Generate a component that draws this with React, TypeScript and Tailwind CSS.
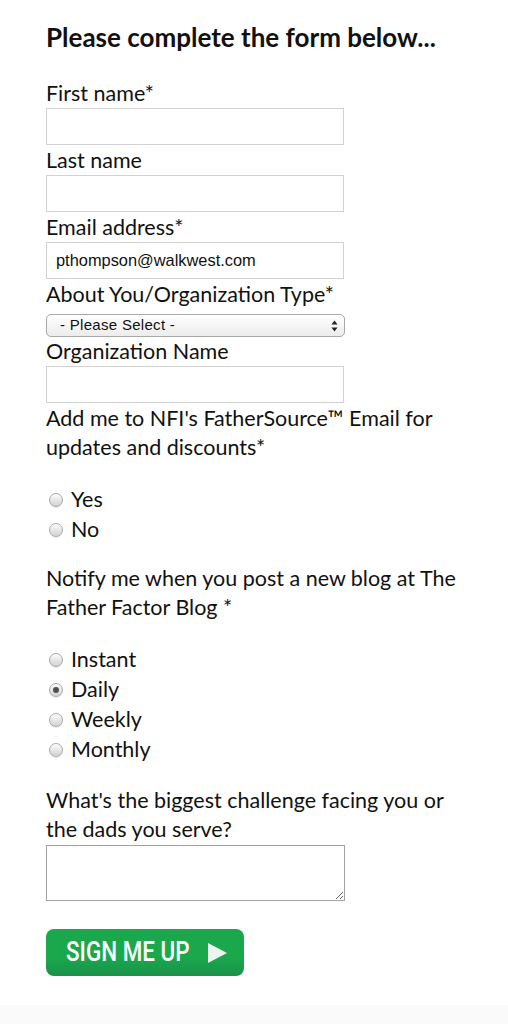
import React from "react";

const font = { fontFamily: "Lato, 'Noto Sans', sans-serif" };

function Label({ children }: { children: React.ReactNode }) {
  return <div className="text-[21.5px] leading-[29px] text-[#111]">{children}</div>;
}

function TextInput({ value }: { value?: string }) {
  return (
    <input
      type="text"
      defaultValue={value}
      className="mb-[1px] block h-[37px] w-[298px] border border-[#d2d2d2] bg-white px-[9px] text-[16.4px] text-[#111] outline-none"
      style={{ fontFamily: "'Liberation Sans', Arial, sans-serif" }}
    />
  );
}

function Radio({ label, checked }: { label: string; checked?: boolean }) {
  return (
    <div className="flex h-[30px] items-center">
      <span className="ml-[3px] mt-[2px] flex h-[14px] w-[14px] items-center justify-center rounded-full border border-[#a9a9a9] bg-linear-to-b from-[#fdfdfd] to-[#d2d2d2] shadow-[0_1px_1px_rgba(0,0,0,0.08)]">
        {checked && <span className="h-[6px] w-[6px] rounded-full bg-[#505050]" />}
      </span>
      <span className="ml-[8px] text-[21.5px] text-[#111]">{label}</span>
    </div>
  );
}

export default function App() {
  return (
    <div className="flex min-h-[1024px] flex-col bg-white" style={font}>
      <div className="h-[1005px] pl-[46px] pr-[40px] pt-[22px]">
        <h2 className="whitespace-nowrap text-[26px] font-bold leading-[30px] text-[#111]">
          Please complete the form below...
        </h2>

        <form className="mt-[27px]" onSubmit={(e) => e.preventDefault()}>
          <Label>First name*</Label>
          <TextInput />
          <Label>Last name</Label>
          <TextInput />
          <Label>Email address*</Label>
          <TextInput value="pthompson@walkwest.com" />
          <Label>About You/Organization Type*</Label>
          <div
            className="relative mt-[5px] flex h-[23px] w-[299px] items-center rounded-[5px] border border-[#a8a8a8] bg-linear-to-b from-white to-[#ececec] pl-[13px] text-[15px] tracking-[0.3px] text-[#111]"
            style={{ fontFamily: "'Liberation Sans', Arial, sans-serif" }}
          >
            - Please Select -
            <svg className="absolute right-[6px] top-[5px]" width="7" height="12" viewBox="0 0 7 12">
              <path d="M3.5 0.5 L6.5 4.5 L0.5 4.5 Z" fill="#222" />
              <path d="M3.5 11.5 L6.5 7.5 L0.5 7.5 Z" fill="#222" />
            </svg>
          </div>
          <Label>Organization Name</Label>
          <TextInput />

          <Label>
            Add me to NFI's FatherSource™ Email for
            <br />
            updates and discounts*
          </Label>
          <div className="mt-[22px]">
            <Radio label="Yes" />
            <Radio label="No" />
          </div>

          <div className="mt-[20px] whitespace-nowrap">
            <Label>
              Notify me when you post a new blog at The
              <br />
              Father Factor Blog *
            </Label>
          </div>
          <div className="mt-[22px]">
            <Radio label="Instant" />
            <Radio label="Daily" checked />
            <Radio label="Weekly" />
            <Radio label="Monthly" />
          </div>

          <div className="mt-[22px] whitespace-nowrap">
            <Label>
              What's the biggest challenge facing you or
              <br />
              the dads you serve?
            </Label>
          </div>
          <textarea className="mt-[1px] block h-[56px] w-[299px] border border-[#a3a3a3] bg-white outline-none" />

          <button
            type="submit"
            className="mt-[28px] flex h-[47px] w-[198px] items-center rounded-[8px] bg-linear-to-b from-[#1ba84c] from-60% to-[#18924a] pl-[20px] text-white"
          >
            <div className="w-[122px] whitespace-nowrap text-left">
              <span
                className="inline-block origin-left scale-x-[0.83] text-[27px] font-medium leading-none"
                style={{ fontFamily: "Roboto, 'Liberation Sans', sans-serif" }}
              >
                SIGN ME UP
              </span>
            </div>
            <svg className="ml-[20px]" width="19" height="20" viewBox="0 0 19 20">
              <path d="M0 0 L19 10 L0 20 Z" fill="#eaf6ee" />
            </svg>
          </button>
        </form>
      </div>
      <div className="h-[19px] bg-[#fafafa]" />
    </div>
  );
}
